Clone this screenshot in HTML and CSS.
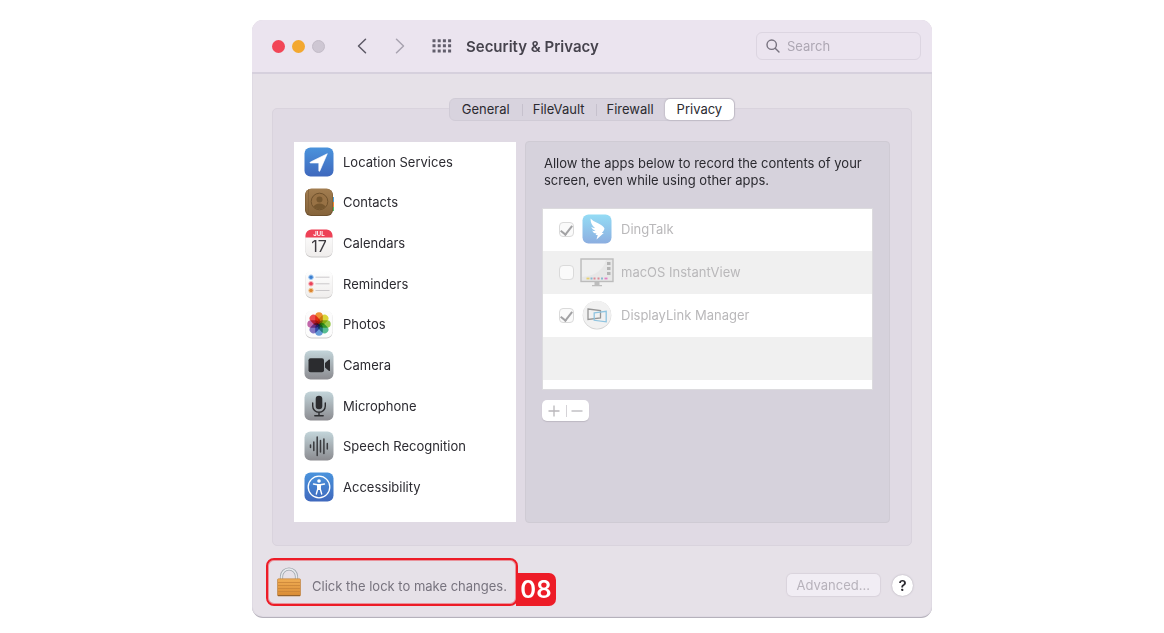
FILE: index.html
```
<!DOCTYPE html>
<html lang="en">
<head>
  <meta charset="UTF-8">
  <meta name="viewport" content="width=device-width, initial-scale=1.0">
  <title>Security &amp; Privacy</title>
  <link rel="stylesheet" href="styles.css">
</head>
<body>

  <main class="window">
    <header class="titlebar">
      <div class="lights">
        <button class="light red" aria-label="Close"></button>
        <button class="light yellow" aria-label="Minimize"></button>
        <button class="light grey" aria-label="Zoom" disabled></button>
      </div>
      <div class="arrows">
        <button class="plain" aria-label="Back">
          <svg width="10" height="16" viewBox="0 0 10 16"><path d="M8.5 1.2L1.5 8l7 6.800" fill="none" stroke="#5d5966" stroke-width="1.5" stroke-linecap="round" stroke-linejoin="round"/></svg>
        </button>
        <button class="plain" aria-label="Forward" disabled>
          <svg width="10" height="16" viewBox="0 0 10 16"><path d="M1.5 1.2L8.5 8l-7 6.800" fill="none" stroke="#a8a3b0" stroke-width="1.5" stroke-linecap="round" stroke-linejoin="round"/></svg>
        </button>
      </div>
      <button class="plain" aria-label="Show All">
        <svg width="20" height="14" viewBox="0 0 20 14" fill="none" stroke="#625e6c" stroke-width="3" stroke-dasharray="3 2.2">
          <path d="M.5 1.7H19.2M.5 6.8H19.2M.5 11.9H19.2"/>
        </svg>
      </button>
      <h1>Security &amp; Privacy</h1>
      <label class="search">
        <svg width="14" height="14" viewBox="0 0 14 14" fill="none" stroke="#77727f" stroke-width="1.4" stroke-linecap="round"><circle cx="5.7" cy="5.7" r="4.700"/><path d="M9.2 9.2L13 13"/></svg>
        <input type="search" placeholder="Search" aria-label="Search">
      </label>
    </header>

    <div class="content">
      <div class="tabs" role="tablist">
        <button class="tab" role="tab">General</button>
        <button class="tab" role="tab">FileVault</button>
        <button class="tab" role="tab">Firewall</button>
        <button class="tab active" role="tab" aria-selected="true">Privacy</button>
      </div>

      <section class="panel">
        <nav class="services">
          <button class="service">
            <svg class="icon" viewBox="0 0 30 30">
              <defs>
                <linearGradient id="blue" x2="0" y2="1"><stop stop-color="#4a93dc"/><stop offset="1" stop-color="#3f68bd"/></linearGradient>
                <linearGradient id="steel" x2="0" y2="1"><stop stop-color="#c3d5da"/><stop offset="1" stop-color="#8b8b90"/></linearGradient>
                <linearGradient id="paper" x2="0" y2="1"><stop stop-color="#ffffff"/><stop offset="1" stop-color="#efedec"/></linearGradient>
                <linearGradient id="leather" x2="0" y2="1"><stop stop-color="#a27d50"/><stop offset="1" stop-color="#86643b"/></linearGradient>
              </defs>
              <rect x=".5" y=".5" width="29" height="29" rx="6" fill="url(#blue)"/>
              <path d="M23.3 6.7L15.8 24q-.7 1-1-.2V16H6.6q-1.3-.3-.2-1z" fill="#fff" stroke="#fff" stroke-width=".6" stroke-linejoin="round"/>
            </svg>
            Location Services
          </button>
          <button class="service">
            <svg class="icon" viewBox="0 0 30 30">
              <path d="M27 10h3v5h-3z" fill="#4b9fd5"/><path d="M27 15h3v5h-3z" fill="#ef8a35"/><path d="M27 20h3v4h-3z" fill="#4fc06a"/>
              <rect x="1" y="2" width="28" height="27" rx="6" fill="#6f512e"/>
              <rect x="1.5" y="1.5" width="27" height="26.5" rx="6" fill="url(#leather)"/>
              <path d="M4.5 2.5v24.5" stroke="#82613a" stroke-width=".8"/>
              <circle cx="15.5" cy="14.5" r="8.3" fill="#987245" stroke="#70522d"/>
              <circle cx="15.5" cy="12.5" r="3" fill="#76572f"/>
              <path d="M9.5 20q1.5-3.5 6-3.5t6 3.5q-6 4.5-12 0z" fill="#76572f"/>
            </svg>
            Contacts
          </button>
          <button class="service">
            <svg class="icon" viewBox="0 0 30 30">
              <rect x="1.5" y="2" width="27" height="27.5" rx="6" fill="#c9c7c7"/>
              <rect x="1.5" y="1.5" width="27" height="27" rx="6" fill="url(#paper)"/>
              <path d="M1.5 9.5v-2a6 6 0 0 1 6-6h15a6 6 0 0 1 6 6v2z" fill="#ee4156"/>
              <text class="month" x="15" y="7.5">JUL</text>
              <text class="day" x="15" y="24">17</text>
            </svg>
            Calendars
          </button>
          <button class="service">
            <svg class="icon" viewBox="0 0 30 30">
              <rect x="1.5" y="2" width="27" height="27.5" rx="6" fill="#cbc9c8"/>
              <rect x="1.5" y="1.5" width="27" height="27" rx="6" fill="url(#paper)"/>
              <path d="M11.5 8.2h14M11.5 14.8h14M11.5 21.5h14" stroke="#cbc9cb"/>
              <g stroke-width="1">
                <circle cx="7" cy="8.2" r="2.3" fill="#3c7fd0" stroke="#a8ccf2"/>
                <circle cx="7" cy="14.8" r="2.3" fill="#eb4158" stroke="#f6b3ba"/>
                <circle cx="7" cy="21.5" r="2.3" fill="#dc8630" stroke="#f3cda2"/>
              </g>
            </svg>
            Reminders
          </button>
          <button class="service">
            <svg class="icon" viewBox="0 0 30 30">
              <rect x="1.5" y="2" width="27" height="27.5" rx="6" fill="#cccaca"/>
              <rect x="1.5" y="1.5" width="27" height="27" rx="6" fill="#fcfcfc"/>
              <g class="petals">
                <rect x="11.2" y="3.3" width="7.6" height="11.7" rx="3.8" fill="#f09335"/>
                <rect x="11.2" y="3.3" width="7.6" height="11.7" rx="3.8" fill="#dcd73a" transform="rotate(45 15 15)"/>
                <rect x="11.2" y="3.3" width="7.6" height="11.7" rx="3.8" fill="#9bcc4c" transform="rotate(90 15 15)"/>
                <rect x="11.2" y="3.3" width="7.6" height="11.7" rx="3.8" fill="#58bf94" transform="rotate(135 15 15)"/>
                <rect x="11.2" y="3.3" width="7.6" height="11.7" rx="3.8" fill="#669ddb" transform="rotate(180 15 15)"/>
                <rect x="11.2" y="3.3" width="7.6" height="11.7" rx="3.8" fill="#8675c3" transform="rotate(225 15 15)"/>
                <rect x="11.2" y="3.3" width="7.6" height="11.7" rx="3.8" fill="#c467ac" transform="rotate(270 15 15)"/>
                <rect x="11.2" y="3.3" width="7.6" height="11.7" rx="3.8" fill="#f04b4e" transform="rotate(315 15 15)"/>
              </g>
            </svg>
            Photos
          </button>
          <button class="service">
            <svg class="icon" viewBox="0 0 30 30">
              <rect x=".5" y=".5" width="29" height="29" rx="6" fill="url(#steel)"/>
              <rect x="4.5" y="8.2" width="15.5" height="14" rx="2" fill="#2b2c2f"/>
              <path d="M21 13l4-3.500q1-.4 1 .6v10.300q0 1-1 .6L21 17.500z" fill="#2b2c2f"/>
            </svg>
            Camera
          </button>
          <button class="service">
            <svg class="icon" viewBox="0 0 30 30">
              <rect x=".5" y=".5" width="29" height="29" rx="6" fill="url(#steel)"/>
              <rect x="11.7" y="4.8" width="6.6" height="13.4" rx="3.3" fill="#2b2c2f"/>
              <path d="M8.7 12v3a6.300 6.300 0 0 0 12.600 0v-3M15 21.300v3.200M10.800 24.700h8.400" fill="none" stroke="#2b2c2f" stroke-width="1.4" stroke-linecap="round"/>
            </svg>
            Microphone
          </button>
          <button class="service">
            <svg class="icon" viewBox="0 0 30 30">
              <rect x=".5" y=".5" width="29" height="29" rx="6" fill="url(#steel)"/>
              <path d="M6.5 14v2.500M9.800 11v8.500M13.200 6v18.500M16.500 9.500v11.500M19.900 8v14.500M23.300 12.500v5.500" stroke="#3a3b3f" stroke-width="1.5" stroke-linecap="round"/>
            </svg>
            Speech Recognition
          </button>
          <button class="service">
            <svg class="icon" viewBox="0 0 30 30">
              <rect x=".5" y=".5" width="29" height="29" rx="6" fill="url(#blue)"/>
              <circle cx="15" cy="15" r="10.8" fill="none" stroke="#fff" stroke-width="1.3"/>
              <circle cx="15" cy="9" r="1.8" fill="#fff"/>
              <path d="M9.5 12l4 .7M20.500 12l-4 .7M13.900 16.500L12.300 22M16.100 16.500l1.600 5.500" fill="none" stroke="#fff" stroke-width="1.4" stroke-linecap="round"/>
              <path d="M13 12.100h4v3l-.3 2.900h-3.400l-.3-2.900z" fill="#fff"/>
            </svg>
            Accessibility
          </button>
        </nav>

        <div class="detail">
          <p>Allow the apps below to record the contents of your screen, even while using other apps.</p>
          <ul class="apps">
            <li>
              <input type="checkbox" id="dingtalk" checked disabled>
              <label for="dingtalk">
                <svg class="app-icon" viewBox="0 0 34 30">
                  <defs><linearGradient id="sky" x2="0" y2="1"><stop stop-color="#94dcf5"/><stop offset="1" stop-color="#8caee0"/></linearGradient></defs>
                  <rect x="2.5" y=".5" width="29" height="29" rx="6" fill="url(#sky)"/>
                  <path d="M10.5 4.500q2.500 3 8 5 5 2.200 6 5.200-.5 2-2.700 4.300h2l-7.300 6.500 1.200-4.500h-2.200l1-1.500q-3.500-.3-4.500-3 2 .8 3.500.5-3.500-1.500-4.300-4 2 1 4 1.200-4.500-3-4.700-9.700z" fill="#fff"/>
                </svg>
                DingTalk
              </label>
            </li>
            <li>
              <input type="checkbox" id="instantview" disabled>
              <label for="instantview">
                <svg class="app-icon" viewBox="0 0 34 30">
                  <path d="M14.5 24h5v4h2.500v1.200H12V28h2.500z" fill="#bdbdbd"/>
                  <rect x="1" y="2" width="32" height="22.5" fill="#e7e7e7" stroke="#bcbcbc" stroke-width="1.4"/>
                  <path d="M2 3h24Q22 18 2 20z" fill="#efefef"/>
                  <path d="M27 5h3.500v3H27zM27 10h3.500v3H27zM27 15h3.500v3H27z" fill="#b3b3b3"/>
                  <path d="M6.500 21.500h3" stroke="#e6cf6d" stroke-width="1.8"/>
                  <path d="M10.500 21.500h2M21 21.500h2" stroke="#8ab8cf" stroke-width="1.8"/>
                  <path d="M13.500 21.500h2M17.500 21.500h2" stroke="#dc8a96" stroke-width="1.8"/>
                  <path d="M24.500 21.500h3" stroke="#e27fc4" stroke-width="1.8"/>
                </svg>
                macOS InstantView
              </label>
            </li>
            <li>
              <input type="checkbox" id="displaylink" checked disabled>
              <label for="displaylink">
                <svg class="app-icon" viewBox="0 0 34 30">
                  <circle cx="17" cy="15.2" r="14.3" fill="#d2d2d2"/>
                  <circle cx="17" cy="14.7" r="14" fill="#f1f1f1"/>
                  <path d="M8 9l12.500 1.500v7.500L8 19.500z" fill="none" stroke="#969696" stroke-width="1.3"/>
                  <path d="M14.200 12.800l12-1.500v10.500l-12-1.500z" fill="none" stroke="#8fc4e0" stroke-width="1.3"/>
                </svg>
                DisplayLink Manager
              </label>
            </li>
          </ul>
          <div class="add-remove">
            <button aria-label="Add" disabled><svg width="12" height="12" viewBox="0 0 12 12"><path d="M6 .5v11M.5 6h11" stroke="#b9b7bb" stroke-width="1.3"/></svg></button>
            <button aria-label="Remove" disabled><svg width="12" height="12" viewBox="0 0 12 12"><path d="M.5 6h11" stroke="#b9b7bb" stroke-width="1.3"/></svg></button>
          </div>
        </div>
      </section>
    </div>

    <footer class="footer">
      <div class="callout">
        <button class="lock">
          <svg width="24" height="30" viewBox="0 0 24 30">
            <defs><linearGradient id="brass" x2="0" y2="1"><stop stop-color="#f0ae55"/><stop offset="1" stop-color="#d98b34"/></linearGradient></defs>
            <path d="M4.5 13V9.500a7.500 7.500 0 0 1 15 0V13" fill="none" stroke="#9fa5ad" stroke-width="3.2"/>
            <path d="M4.5 13V9.500a7.500 7.500 0 0 1 15 0V13" fill="none" stroke="#e8ebee" stroke-width="1.6"/>
            <rect x=".5" y="11.8" width="23" height="17.2" rx="1" fill="url(#brass)" stroke="#b87a37" stroke-width=".6"/>
            <path d="M1 15.500h22M1 18.500h22M1 21.500h22M1 24.500h22" stroke="#c98439" stroke-width=".8"/>
            <path d="M1 28.500h22" stroke="#94632f"/>
          </svg>
          <span>Click the lock to make changes.</span>
        </button>
        <span class="badge">08</span>
      </div>
      <button class="advanced" disabled>Advanced...</button>
      <button class="help" aria-label="Help">?</button>
    </footer>
  </main>

</body>
</html>
```
FILE: styles.css
```
* {
  box-sizing: border-box;
}
body {
  margin: 0;
  padding: 20px 0 15px 20px;
  background: #fff;
  color: #2b2a30;
  font-family: Inter, "Liberation Sans", sans-serif;
  font-size: 13px;
}
button {
  padding: 0;
  border: none;
  background: none;
  color: inherit;
  font: inherit;
}
.window {
  max-width: 680px;
  margin: 0 auto;
  background: #e6e1e8;
  border-radius: 11px;
  border-bottom: 1px solid #b5b1bb;
  box-shadow: inset 0 0 0 1px #dfdae3;
}

/* title bar */
.titlebar {
  display: flex;
  align-items: center;
  height: 54px;
  padding: 0 11px 0 20px;
  background: #ebe4ef;
  border-bottom: 2px solid #d6d0dd;
  border-radius: 11px 11px 0 0;
}
.lights {
  display: flex;
  gap: 7px;
}
.light {
  width: 13px;
  height: 13px;
  border-radius: 50%;
}
.red {
  background: #f24657;
}
.yellow {
  background: #f3a830;
}
.grey {
  background: #cec7d3;
  border: 1px solid #c3bcc8;
}
.arrows {
  display: flex;
  gap: 28px;
  margin: 0 27px 0 32px;
}
.plain {
  display: flex;
}
h1 {
  flex: 1;
  margin: 0 0 0 14px;
  color: #46434d;
  font-size: 15px;
  font-weight: 600;
}
.search {
  display: flex;
  align-items: center;
  gap: 7px;
  width: 165px;
  height: 28px;
  padding: 0 9px;
  border: 1px solid #dcd5e1;
  border-radius: 6px;
}
.search input {
  flex: 1;
  min-width: 0;
  padding: 0;
  border: none;
  outline: none;
  background: none;
  font: inherit;
}
.search input::placeholder {
  color: #ada7b3;
}

/* tabs and panel */
.content {
  padding: 24px 20px 0;
}
.tabs {
  position: relative;
  display: flex;
  width: fit-content;
  height: 23px;
  margin: 0 auto -13px;
  background: #d8d3de;
  border: 1px solid #d0cbd6;
  border-radius: 6px;
}
.tab {
  padding: 0 12px 2px;
}
.tab + .tab:not(.active) {
  padding: 0 11px 2px;
  background: linear-gradient(#c6c1cd, #c6c1cd) left center / 1px 12px no-repeat;
}
.tab.active {
  background: #fff;
  border-radius: 5px;
  box-shadow: 0 0 2px #9c97a3;
}
.panel {
  display: flex;
  gap: 9px;
  padding: 32px 21px 22px;
  background: #e0dae4;
  border: 1px solid #d9d3dd;
  border-radius: 5px;
}
.services {
  display: grid;
  grid-auto-rows: 1fr;
  flex: 0 0 222px;
  margin: 1px 0;
  padding-bottom: 14px;
  background: #fff;
}
.service {
  display: flex;
  align-items: center;
  gap: 9px;
  padding: 0 0 1px 10px;
  text-align: left;
}
.icon {
  width: 30px;
  height: 30px;
}
.month {
  fill: #fff;
  font-size: 6px;
  font-weight: 700;
  text-anchor: middle;
}
.day {
  fill: #3d3b40;
  font-size: 16px;
  text-anchor: middle;
}
.petals rect {
  mix-blend-mode: multiply;
}
.detail {
  flex: 1;
  min-height: 382px;
  padding: 13px 16px;
  background: #d6d2dc;
  border: 1px solid #cfcbd4;
  border-radius: 4px;
}
.detail p {
  margin: 0 0 19px 2px;
  line-height: 17px;
}
.apps {
  height: 182px;
  margin: 0;
  padding: 0;
  background: repeating-linear-gradient(#fff 0 43px, #f0f0f0 43px 86px);
  box-shadow: inset 0 0 0 1px #dcdbde;
  list-style: none;
}
.apps li {
  display: flex;
  align-items: center;
  gap: 6px;
  height: 43px;
  padding: 0 0 1px 17px;
}
.apps label {
  display: flex;
  align-items: center;
  gap: 7px;
  color: #b9b8ba;
}
.app-icon {
  width: 34px;
  height: 30px;
}
.apps input {
  display: grid;
  place-items: center;
  appearance: none;
  width: 15px;
  height: 15px;
  margin: 0;
  background: #fafafa;
  border: 1px solid #dadada;
  border-radius: 4px;
}
.apps input:checked::before {
  content: "";
  width: 5px;
  height: 10px;
  margin-bottom: 3px;
  border: solid #a2a2a4;
  border-width: 0 2px 2px 0;
  transform: rotate(38deg);
}
.add-remove {
  display: flex;
  width: 47px;
  height: 21px;
  margin-top: 10px;
  background: #fff;
  border-radius: 5px;
  box-shadow: 0 1px 1px #bdb8c2;
}
.add-remove button {
  display: flex;
  flex: 1;
  align-items: center;
  justify-content: center;
}
.add-remove button + button {
  background: linear-gradient(#d5d3d7, #d5d3d7) left center / 1px 12px no-repeat;
}

/* footer */
.footer {
  display: flex;
  align-items: center;
  padding: 12px 19px 11px 14px;
}
.callout {
  position: relative;
  margin-right: auto;
  padding: 6px 9px;
  border: 2px solid #ed1c27;
  border-radius: 8px;
  box-shadow: inset 0 0 0 1px #ed1c2766;
}
.lock {
  display: flex;
  align-items: center;
  gap: 11px;
  height: 32px;
  color: #77737e;
}
.lock span {
  padding-top: 8px;
}
.badge {
  position: absolute;
  right: -40px;
  bottom: -2px;
  width: 40px;
  height: 33px;
  background: #ed1c27;
  border-radius: 0 7px 7px 0;
  color: #fff;
  font-size: 24px;
  font-weight: 600;
  line-height: 34px;
  text-align: center;
}
.advanced {
  height: 22px;
  margin: 6px 12px 0 0;
  padding: 0 10px;
  background: #f1edf4;
  border-radius: 5px;
  box-shadow: 0 0 1px 1px #d9d3dc;
  color: #b7b2bb;
}
.help {
  width: 21px;
  height: 21px;
  margin-top: 6px;
  background: #fff;
  border-radius: 50%;
  box-shadow: 0 0 2px #a9a4ae;
  font-size: 15px;
  font-weight: 600;
}
```
